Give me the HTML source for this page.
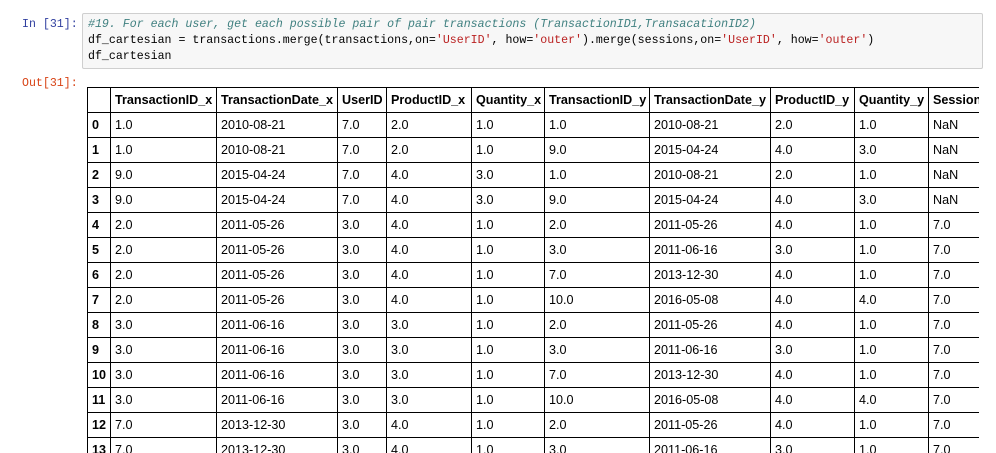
<!DOCTYPE html>
<html><head><style>
body{margin:0;background:#fff;width:996px;height:453px;overflow:hidden;position:relative;font-family:"Liberation Sans",Arial,sans-serif}
.pr{position:absolute;font-family:"Liberation Mono",monospace;font-size:11.6px}
.in{left:22px;top:18px;color:#303f9f}
.out{left:22px;top:77px;color:#d84315}
.box{position:absolute;left:82px;top:13px;width:899px;height:54px;background:#f7f7f7;border:1px solid #cfcfcf;border-radius:2px}
.code{position:absolute;left:88px;top:17px;font-family:"Liberation Mono",monospace;font-size:11.6px;line-height:16px;color:#000;white-space:pre}
.cm{color:#408080;font-style:italic}.s{color:#ba2121}
.wrap{position:absolute;left:87px;top:87px;width:892px;height:366px;overflow:hidden}
table{border-collapse:collapse;table-layout:fixed;font-size:12.6px;width:1000px}
td,th{border:1px solid #000;height:24px;padding:0 4px;text-align:left;white-space:nowrap;overflow:hidden;color:#000}
th{font-weight:bold}
</style></head><body>
<div class="pr in">In [31]:</div>
<div class="box"></div>
<div class="code"><span class="cm">#19. For each user, get each possible pair of pair transactions (TransactionID1,TransacationID2)</span>
df_cartesian = transactions.merge(transactions,on=<span class="s">'UserID'</span>, how=<span class="s">'outer'</span>).merge(sessions,on=<span class="s">'UserID'</span>, how=<span class="s">'outer'</span>)
df_cartesian</div>
<div class="pr out">Out[31]:</div>
<div class="wrap"><table>
<colgroup><col style="width:23px"><col style="width:106px"><col style="width:121px"><col style="width:49px"><col style="width:85px"><col style="width:73px"><col style="width:105px"><col style="width:121px"><col style="width:84px"><col style="width:74px"><col style="width:159px"></colgroup>
<tr><th></th><th>TransactionID_x</th><th>TransactionDate_x</th><th>UserID</th><th>ProductID_x</th><th>Quantity_x</th><th>TransactionID_y</th><th>TransactionDate_y</th><th>ProductID_y</th><th>Quantity_y</th><th>SessionDate</th></tr>
<tr><th>0</th><td>1.0</td><td>2010-08-21</td><td>7.0</td><td>2.0</td><td>1.0</td><td>1.0</td><td>2010-08-21</td><td>2.0</td><td>1.0</td><td>NaN</td></tr>
<tr><th>1</th><td>1.0</td><td>2010-08-21</td><td>7.0</td><td>2.0</td><td>1.0</td><td>9.0</td><td>2015-04-24</td><td>4.0</td><td>3.0</td><td>NaN</td></tr>
<tr><th>2</th><td>9.0</td><td>2015-04-24</td><td>7.0</td><td>4.0</td><td>3.0</td><td>1.0</td><td>2010-08-21</td><td>2.0</td><td>1.0</td><td>NaN</td></tr>
<tr><th>3</th><td>9.0</td><td>2015-04-24</td><td>7.0</td><td>4.0</td><td>3.0</td><td>9.0</td><td>2015-04-24</td><td>4.0</td><td>3.0</td><td>NaN</td></tr>
<tr><th>4</th><td>2.0</td><td>2011-05-26</td><td>3.0</td><td>4.0</td><td>1.0</td><td>2.0</td><td>2011-05-26</td><td>4.0</td><td>1.0</td><td>7.0</td></tr>
<tr><th>5</th><td>2.0</td><td>2011-05-26</td><td>3.0</td><td>4.0</td><td>1.0</td><td>3.0</td><td>2011-06-16</td><td>3.0</td><td>1.0</td><td>7.0</td></tr>
<tr><th>6</th><td>2.0</td><td>2011-05-26</td><td>3.0</td><td>4.0</td><td>1.0</td><td>7.0</td><td>2013-12-30</td><td>4.0</td><td>1.0</td><td>7.0</td></tr>
<tr><th>7</th><td>2.0</td><td>2011-05-26</td><td>3.0</td><td>4.0</td><td>1.0</td><td>10.0</td><td>2016-05-08</td><td>4.0</td><td>4.0</td><td>7.0</td></tr>
<tr><th>8</th><td>3.0</td><td>2011-06-16</td><td>3.0</td><td>3.0</td><td>1.0</td><td>2.0</td><td>2011-05-26</td><td>4.0</td><td>1.0</td><td>7.0</td></tr>
<tr><th>9</th><td>3.0</td><td>2011-06-16</td><td>3.0</td><td>3.0</td><td>1.0</td><td>3.0</td><td>2011-06-16</td><td>3.0</td><td>1.0</td><td>7.0</td></tr>
<tr><th>10</th><td>3.0</td><td>2011-06-16</td><td>3.0</td><td>3.0</td><td>1.0</td><td>7.0</td><td>2013-12-30</td><td>4.0</td><td>1.0</td><td>7.0</td></tr>
<tr><th>11</th><td>3.0</td><td>2011-06-16</td><td>3.0</td><td>3.0</td><td>1.0</td><td>10.0</td><td>2016-05-08</td><td>4.0</td><td>4.0</td><td>7.0</td></tr>
<tr><th>12</th><td>7.0</td><td>2013-12-30</td><td>3.0</td><td>4.0</td><td>1.0</td><td>2.0</td><td>2011-05-26</td><td>4.0</td><td>1.0</td><td>7.0</td></tr>
<tr><th>13</th><td>7.0</td><td>2013-12-30</td><td>3.0</td><td>4.0</td><td>1.0</td><td>3.0</td><td>2011-06-16</td><td>3.0</td><td>1.0</td><td>7.0</td></tr>
</table></div>
</body></html>
